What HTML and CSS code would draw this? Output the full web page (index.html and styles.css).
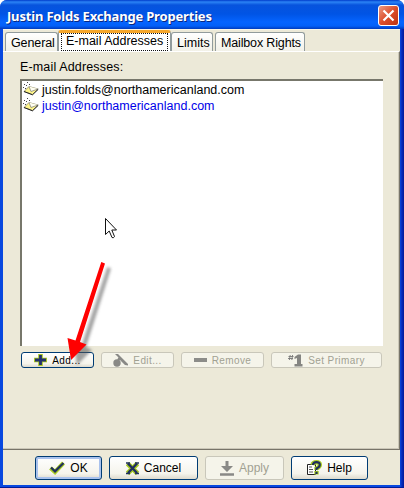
FILE: index.html
```
<!DOCTYPE html>
<html lang="en">
<head>
<meta charset="utf-8">
<title>Justin Folds Exchange Properties</title>
<link rel="stylesheet" href="styles.css">
</head>
<body>
<main class="window">
  <header class="titlebar">
    <h1 class="title">Justin Folds Exchange Properties</h1>
    <button class="close" aria-label="Close"><svg width="13" height="13" viewBox="0 0 13 13"><path d="M1.500 1.500 11.500 11.500M11.500 1.500 1.500 11.500" stroke="#fff" stroke-width="2.2"/></svg></button>
  </header>
  <div class="client">
    <nav class="tabs">
      <span class="tab general">General</span>
      <span class="tab active"><span class="focus">E-mail Addresses</span></span>
      <span class="tab limits">Limits</span>
      <span class="tab rights">Mailbox Rights</span>
    </nav>
    <section class="page">
      <div class="label">E-mail Addresses:</div>
      <ul class="list">
        <li class="item"><svg class="mail" width="16" height="16" viewBox="0 0 16 16"><path d="M1 9.500 6 4.500 15 7 9.500 12.500Z" fill="#fff68a" stroke="#8a8668" stroke-width=".8"/><path d="M6 4.500 8 9.500 15 7" fill="#fffef0" stroke="#777" stroke-width=".7"/><path d="M1 9.500 9.500 12.800 15.300 7.300" fill="none" stroke="#222"/><path d="M1 2.500h1M4 .5h1M3 3.500h1M0 5.500h1M6 2.500h1M2 6.500h1" stroke="#444"/></svg><span class="address">justin.folds@northamericanland.com</span></li>
        <li class="item alias"><svg class="mail" width="16" height="16" viewBox="0 0 16 16"><path d="M1 9.500 6 4.500 15 7 9.500 12.500Z" fill="#fff68a" stroke="#8a8668" stroke-width=".8"/><path d="M6 4.500 8 9.500 15 7" fill="#fffef0" stroke="#777" stroke-width=".7"/><path d="M1 9.500 9.500 12.800 15.300 7.300" fill="none" stroke="#222"/><path d="M1 2.500h1M4 .5h1M3 3.500h1M0 5.500h1M6 2.500h1M2 6.500h1" stroke="#444"/></svg><span class="address">justin@northamericanland.com</span></li>
      </ul>
      <div class="actions">
        <button class="btn small add"><svg width="13" height="12" viewBox="0 0 13 12"><path d="M6.5 0v12M0 6h13" stroke="#a8c820" stroke-width="4.6"/><path d="M6.5 1v10M1 6h11" stroke="#23306c" stroke-width="2.8"/></svg><span>Add...</span></button>
        <button class="btn small edit" disabled><svg width="16" height="14" viewBox="0 0 16 14"><path d="M2 1 5 1 15 11 15 12.500 12 12 7 7 5 7 6 5Z" fill="#898986"/><circle cx="4" cy="10" r="3.7" fill="#898986"/><path d="M5 7 7 4" stroke="#898986" stroke-width="2"/></svg><span>Edit...</span></button>
        <button class="btn small remove" disabled><svg width="13" height="12" viewBox="0 0 13 12"><path d="M0 6h13" stroke="#8c8c89" stroke-width="4"/></svg><span>Remove</span></button>
        <button class="btn small primary" disabled><svg width="15" height="13" viewBox="0 0 15 13"><path d="M2.2 1 1.400 6M4.600 1 3.800 6M.5 2.500h5M0 4.500h5" stroke="#777" stroke-width=".9"/><path d="M6.500 3 10 .5h3V10h1.500v2.500h-8V10H9V4L6.500 5Z" fill="#858582"/></svg><span>Set Primary</span></button>
      </div>
    </section>
    <footer class="footer">
      <button class="btn ok default"><svg width="16" height="14" viewBox="0 0 16 14"><path d="M1.500 7 6 11 14.500 2" fill="none" stroke="#a9cc24" stroke-width="4.2"/><path d="M2 6.500 6 10.300 14.500 2" fill="none" stroke="#20305c" stroke-width="2.3"/></svg><span>OK</span></button>
      <button class="btn cancel"><svg width="13" height="13" viewBox="0 0 13 13"><path d="M1.500 1.500 11.500 11.500M11.500 1.500 1.500 11.500" stroke="#a9cc24" stroke-width="4.800"/><path d="M2 1.500 11 11M11 1.500 2 11" stroke="#20305c" stroke-width="2.500"/><path d="M0 1h4M9 1h4M0 11.500h4M9 11.500h4" stroke="#20305c" stroke-width="1.300"/></svg><span>Cancel</span></button>
      <button class="btn apply" disabled><svg width="14" height="15" viewBox="0 0 14 15"><path d="M5.500 0h3v5H13L7 11 1 5h4.500Z" fill="#898986"/><path d="M0 13.500h14" stroke="#898986" stroke-width="2.600"/></svg><span>Apply</span></button>
      <button class="btn help"><svg width="15" height="16" viewBox="0 0 15 16"><path d="M.5 4.500h8v10h-8Z" fill="#fff" stroke="#222"/><path d="M2 7h3M2 9.500h4M2 12h4" stroke="#555"/><path d="M5.500 5Q6 2.200 9.500 2.200T12.800 5Q12.800 7 9.500 8.500V10M9.500 11V14.500" fill="none" stroke="#a9cc24" stroke-width="4.400"/><path d="M6 5Q6 2.200 9.500 2.200T12.800 5Q12.800 7 9.500 8.500V10M9.500 11.800V14" fill="none" stroke="#20305c" stroke-width="2.200"/></svg><span>Help</span></button>
    </footer>
  </div>
  <svg class="cursor" width="13" height="21" viewBox="0 0 13 21"><path d="M.5.5V16.500L4.200 13 7 19.500Q8.500 20.500 9.500 18.500L6.800 12H11.500Z" fill="#fff" stroke="#111"/></svg>
  <svg class="arrow" width="60" height="116" viewBox="0 0 60 116">
    <defs><filter id="soft" x="-30%" y="-20%" width="160%" height="140%"><feGaussianBlur stdDeviation="1.5"/></filter></defs>
    <path d="M39.300 6 43 7.500 18 86 24 89 9 104 5.500 82 13.500 84.500Z" transform="translate(6 5)" fill="#555" opacity=".55" filter="url(#soft)"/>
    <path d="M39.300 6 43 7.500 18 86 24.500 88.500 9 104 5.500 82 13.500 84.500Z" fill="red"/>
  </svg>
</main>
</body>
</html>
```
FILE: styles.css
```
* { box-sizing: border-box; }
body { margin: 0; background: #fff; font-family: "Liberation Sans", sans-serif; font-size: 12.5px; color: #000; }
.window { position: relative; width: 404px; height: 488px; display: flex; flex-direction: column; border-radius: 7px 7px 0 0; background: linear-gradient(90deg, #0848df 400px, #0528b8 402px, #001a98); overflow: hidden; border-bottom: 1px solid #001a98; }
.titlebar { height: 29px; flex: none; display: flex; align-items: center; justify-content: space-between; padding: 2px 5px 0 7px; background: linear-gradient(#003bcb 0, #2b83f5 2px, #0753dd 5px, #0054e5 14px, #0564ff 22px, #0360f8 26px, #003abc 29px); }
.title { margin: 0; font: bold 13px/20px "Noto Sans", sans-serif; letter-spacing: -.18px; color: #fff; text-shadow: 1px 1px #0b2880; white-space: nowrap; }
.close { width: 21px; height: 21px; padding: 0; border: 1px solid #fff; border-radius: 3px; background: linear-gradient(135deg, #ed9a83, #dc4e2b 50%, #bc3312); display: flex; align-items: center; justify-content: center; }
.client { flex: 1; margin: 0 4px 2px 3px; background: #ece9d8; display: flex; flex-direction: column; border-top: 1px solid #f8f6ea; }
.tabs { height: 21px; padding-left: 2px; display: flex; align-items: flex-end; flex: none; }
.tab { height: 19px; border: 1px solid #919b9c; border-bottom: 0; border-radius: 3px 3px 0 0; background: linear-gradient(#fff, #f2f1e8); line-height: 20px; padding-left: 5px; white-space: nowrap; }
.general { width: 53px; letter-spacing: -.1px; }
.limits { width: 42px; }
.rights { width: 90px; margin-left: 2px; letter-spacing: -.15px; }
.active { width: 113px; height: 21px; padding: 0 2px; border-top: 3px solid #f5a62b; background: #fff; }
.focus { display: block; height: 18px; border: 1px dotted #111; line-height: 15px; padding-left: 4px; }
.page { height: 399px; flex: none; padding: 8px 0 0 17px; border-top: 1px solid #fff; border-bottom: 1px solid #777468; border-right: 1px solid #77756a; box-shadow: inset -1px -1px #cbc7b8; }
.label { height: 19px; line-height: 15px; white-space: nowrap; letter-spacing: .15px; }
.list { list-style: none; margin: 0; padding: 1px 2px 2px; width: 363px; height: 267px; background: #fff; border-top: 2px solid #77776b; border-left: 2px solid #77776b; }
.item { height: 16px; display: flex; align-items: center; line-height: 16px; }
.mail { flex: none; margin: 0 3px 0 -1px; }
.address { white-space: nowrap; }
.alias { color: #0000e8; }
.actions { display: flex; gap: 7px; margin: 6px 0 0 1px; }
.btn { height: 24px; padding: 0; border: 1px solid #003c74; border-radius: 3px; background: linear-gradient(#fff, #f5f4ec 75%, #dddacd); font: 12px "Liberation Sans", sans-serif; color: #000; display: flex; align-items: center; justify-content: center; gap: 5px; white-space: nowrap; }
.btn svg { flex: none; }
.small { height: 16px; font-size: 10px; letter-spacing: .4px; }
.btn:disabled { border-color: #c9c7ba; background: #f5f4ea; color: #a1a192; }
.add { width: 73px; }
.edit { width: 73px; gap: 4px; }
.remove { width: 83px; }
.primary { width: 111px; }
.footer { display: flex; gap: 7px; padding: 6px 0 0 32px; }
.ok { width: 67px; }
.cancel { width: 89px; }
.apply { width: 79px; }
.help { width: 77px; }
.default { box-shadow: inset 0 0 0 2px #a9c2ed; }
.cursor { position: absolute; left: 105px; top: 218px; }
.arrow { position: absolute; left: 62px; top: 256px; overflow: visible; }
```
